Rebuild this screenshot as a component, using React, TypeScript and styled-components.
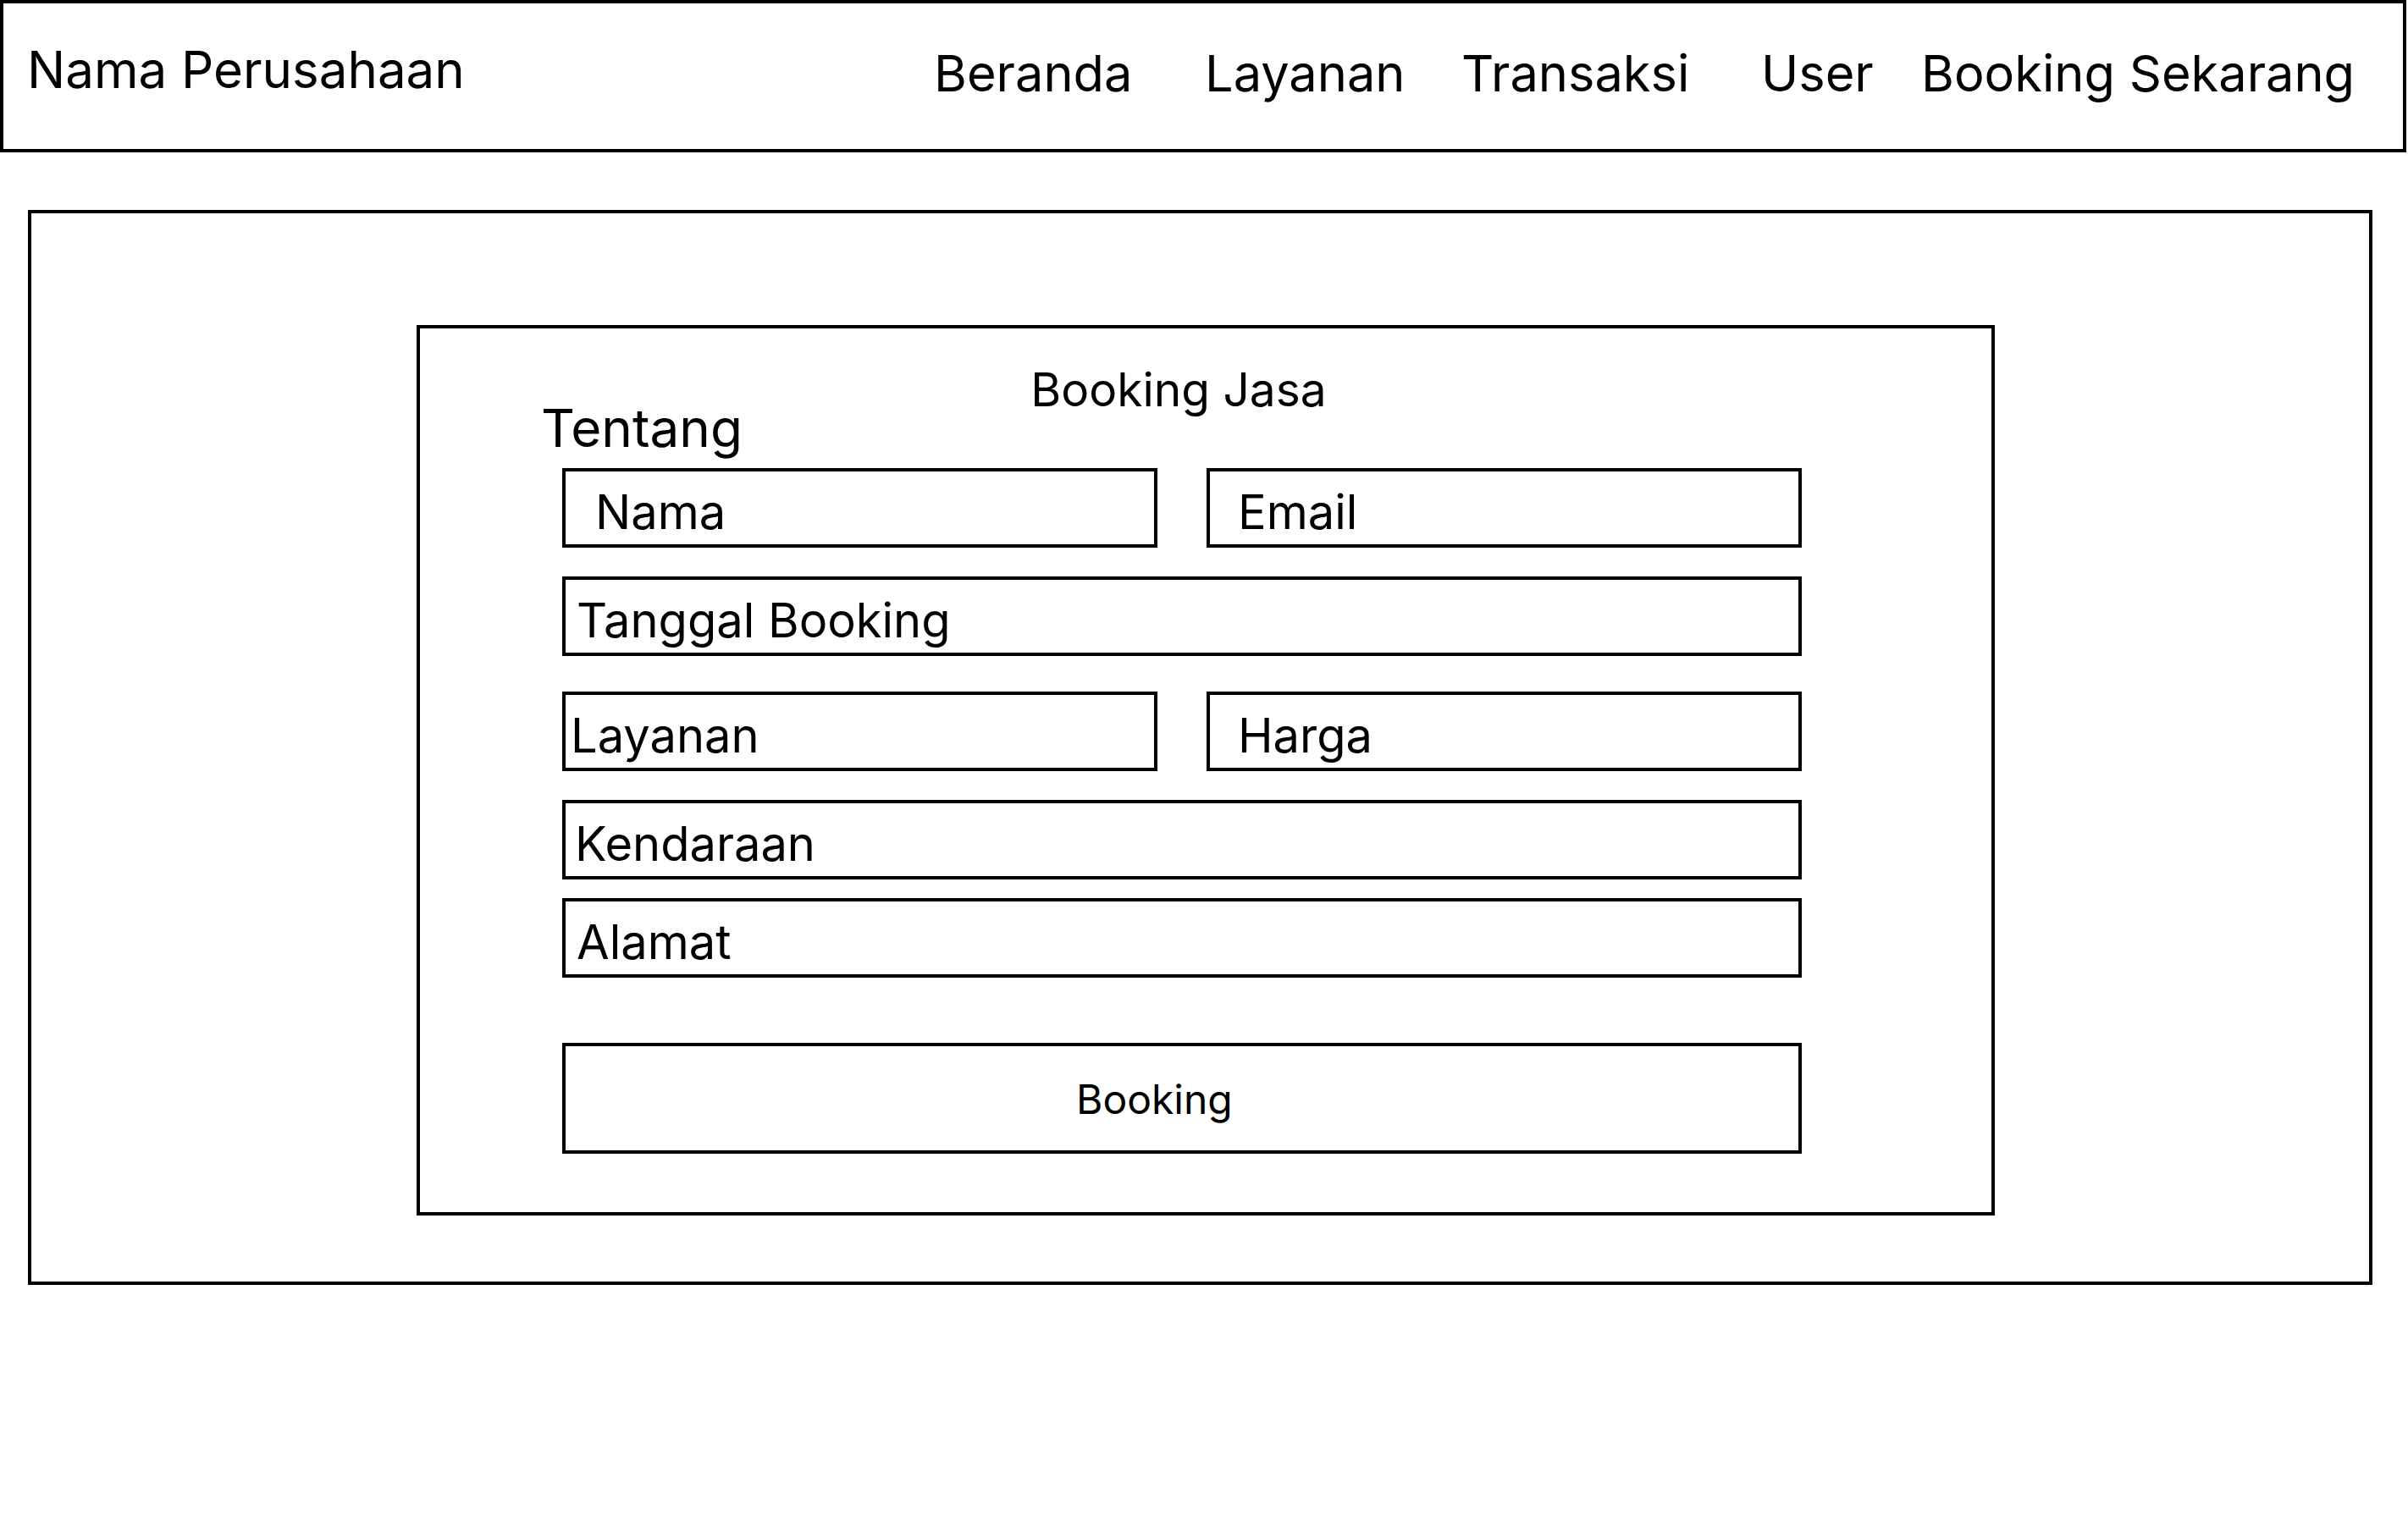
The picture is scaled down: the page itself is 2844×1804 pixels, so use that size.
import React from "react";
import styled, { createGlobalStyle } from "styled-components";

const GlobalStyle = createGlobalStyle`
  html, body {
    margin: 0;
    padding: 0;
    background: #ffffff;
  }
  body {
    font-family: Inter, "Noto Sans", "Liberation Sans", sans-serif;
    color: #000000;
  }
  * {
    box-sizing: border-box;
  }
`;

const Header = styled.header`
  width: 2842px;
  height: 180px;
  border: 4px solid #000;
  display: flex;
  align-items: flex-start;
  padding: 48px 0 0 28px;
`;

const Brand = styled.div`
  width: 1071px;
  flex-shrink: 0;
  font-size: 60px;
  line-height: 60px;
  white-space: nowrap;
`;

const Nav = styled.nav`
  display: flex;
  margin-top: 4px;
`;

const NavLink = styled.a<{ $width?: number }>`
  display: block;
  width: ${(p) => (p.$width ? `${p.$width}px` : "auto")};
  flex-shrink: 0;
  font-size: 59.5px;
  line-height: 60px;
  color: #000;
  text-decoration: none;
  white-space: nowrap;
`;

const Main = styled.main`
  margin: 68px 0 0 33px;
  width: 2769px;
  height: 1270px;
  border: 4px solid #000;
  padding: 132px 0 0 455px;
`;

const Card = styled.section`
  width: 1864px;
  height: 1052px;
  border: 4px solid #000;
  padding: 51px 0 0 143px;
`;

const Title = styled.h2`
  margin: 0 0 0 25px;
  width: 1464px;
  padding-right: 8px;
  text-align: center;
  font-size: 55px;
  line-height: 42px;
  font-weight: 400;
`;

const SubTitle = styled.h3`
  margin: 0;
  font-size: 62px;
  line-height: 50px;
  font-weight: 400;
`;

const Form = styled.form`
  margin: 22px 0 0 25px;
  width: 1464px;
  display: flex;
  flex-direction: column;
`;

const PairRow = styled.div<{ $gap?: number }>`
  display: grid;
  grid-template-columns: 703px 703px;
  column-gap: 58px;
  margin-top: ${(p) => p.$gap ?? 0}px;
`;

const Field = styled.div<{ $pad: number; $gap?: number }>`
  height: 94px;
  border: 4px solid #000;
  padding: 20px 0 0 ${(p) => p.$pad}px;
  margin-top: ${(p) => p.$gap ?? 0}px;
  font-size: 56px;
  line-height: 56px;
  white-space: nowrap;
`;

const SubmitButton = styled.button`
  display: block;
  margin-top: 77px;
  width: 100%;
  height: 131px;
  border: 4px solid #000;
  background: #fff;
  color: #000;
  padding: 3px 0 0 603px;
  text-align: left;
  font-family: inherit;
  font-size: 48px;
  line-height: 48px;
  cursor: pointer;
`;

export default function App() {
  return (
    <>
      <GlobalStyle />
      <Header>
        <Brand>Nama Perusahaan</Brand>
        <Nav>
          <NavLink $width={320}>Beranda</NavLink>
          <NavLink $width={303}>Layanan</NavLink>
          <NavLink $width={354}>Transaksi</NavLink>
          <NavLink $width={189}>User</NavLink>
          <NavLink>Booking Sekarang</NavLink>
        </Nav>
      </Header>
      <Main>
        <Card>
          <Title>Booking Jasa</Title>
          <SubTitle>Tentang</SubTitle>
          <Form onSubmit={(e) => e.preventDefault()}>
            <PairRow>
              <Field $pad={35}>Nama</Field>
              <Field $pad={33}>Email</Field>
            </PairRow>
            <Field $pad={13} $gap={34}>Tanggal Booking</Field>
            <PairRow $gap={42}>
              <Field $pad={6}>Layanan</Field>
              <Field $pad={33}>Harga</Field>
            </PairRow>
            <Field $pad={11} $gap={34}>Kendaraan</Field>
            <Field $pad={13} $gap={22}>Alamat</Field>
            <SubmitButton type="submit">Booking</SubmitButton>
          </Form>
        </Card>
      </Main>
    </>
  );
}
